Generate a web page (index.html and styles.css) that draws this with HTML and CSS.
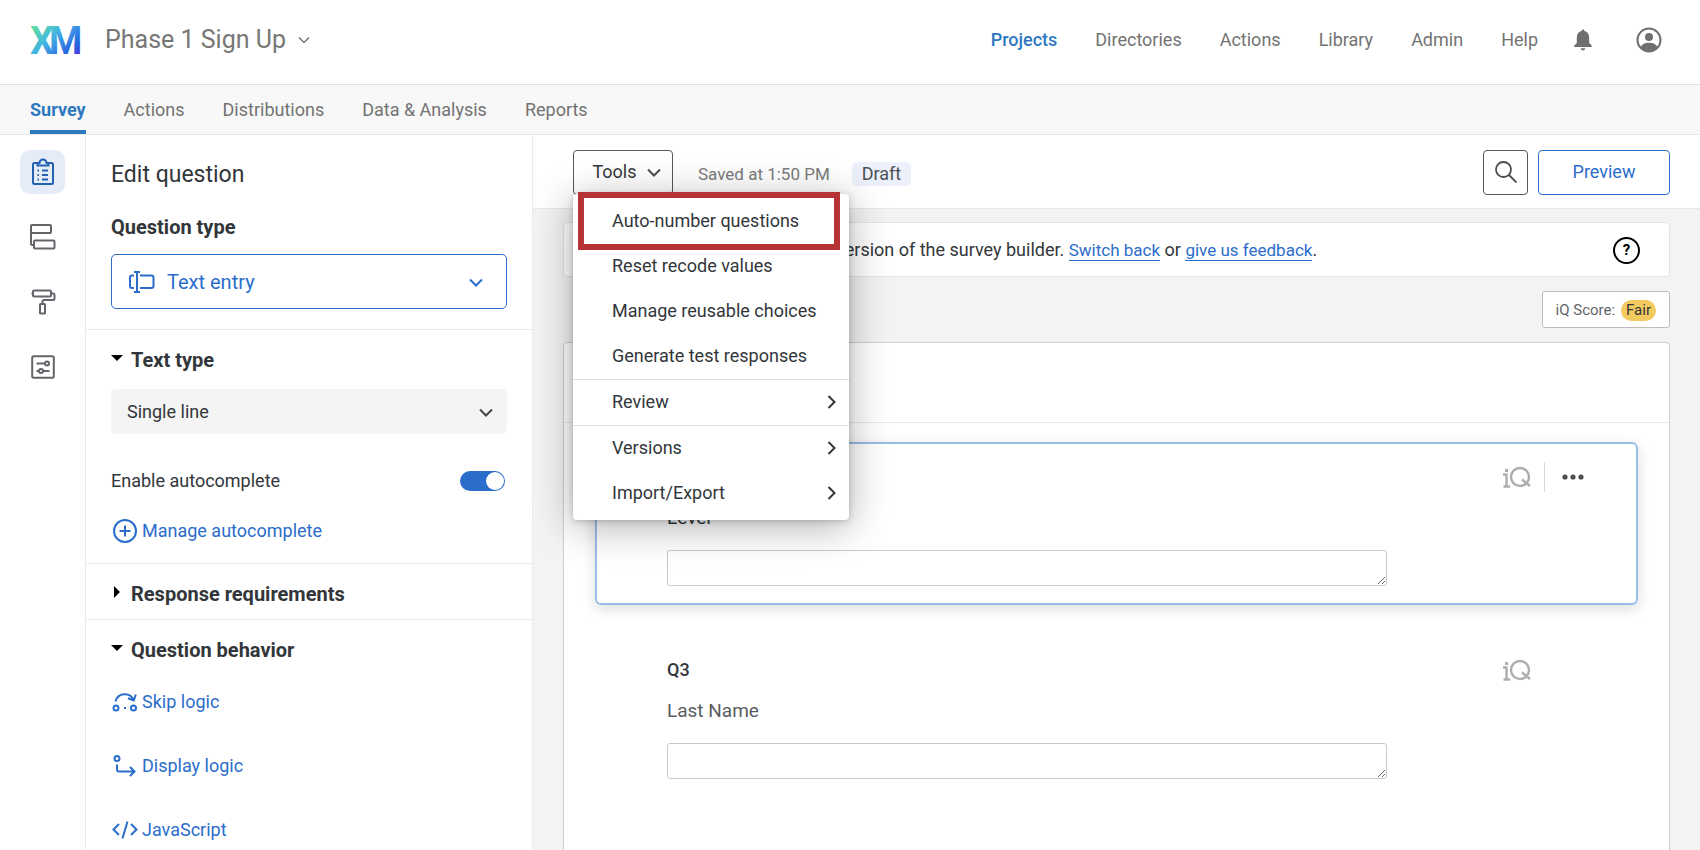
FILE: index.html
```html
<!DOCTYPE html>
<html lang="en">
<head>
  <meta charset="UTF-8">
  <title>Phase 1 Sign Up - Survey Builder</title>
  <link rel="stylesheet" href="styles.css">
</head>
<body>

<header class="header">
  <svg class="logo" width="52" height="48" viewBox="0 -11 52 48" role="img" aria-label="XM">
    <defs>
      <linearGradient id="xm" gradientUnits="userSpaceOnUse" x1="8" y1="-2" x2="42" y2="36">
        <stop offset="0" stop-color="#5fdca6"/>
        <stop offset="0.35" stop-color="#41b5e0"/>
        <stop offset="0.6" stop-color="#3a86e6"/>
        <stop offset="0.8" stop-color="#2464dc"/>
        <stop offset="1" stop-color="#5a2ae0"/>
      </linearGradient>
    </defs>
    <g class="logo-text" fill="url(#xm)">
      <text x="0" y="27">X</text>
      <text x="19" y="27">M</text>
    </g>
  </svg>
  <button class="project-name">Phase 1 Sign Up
    <svg width="12" height="8" viewBox="0 0 12 8"><path d="M1 1.5l5 5 5-5"/></svg>
  </button>
  <nav class="main-nav">
    <a href="#" class="current">Projects</a>
    <a href="#">Directories</a>
    <a href="#">Actions</a>
    <a href="#">Library</a>
    <a href="#">Admin</a>
    <a href="#">Help</a>
  </nav>
  <button class="icon-btn bell" aria-label="Notifications">
    <svg width="18" height="22" viewBox="0 0 18 22"><path d="M9 0.5c-1 0-1.5 0.7-1.5 1.6C4.7 2.8 2.8 5 2.8 8.5v5.5L0.3 16.5v1.5h17.4v-1.5L15.2 14V8.5c0-3.5-1.9-5.7-4.7-6.4C10.5 1.2 10 0.5 9 0.5zM6.8 19.2a2.2 2.2 0 0 0 4.4 0z"/></svg>
  </button>
  <button class="icon-btn" aria-label="Account">
    <svg width="26" height="26" viewBox="0 0 26 26"><circle class="ring" cx="13" cy="13" r="11.5"/><circle cx="13" cy="10" r="4"/><path d="M4.5 20.5C6 17 9 15.8 13 15.8s7 1.2 8.5 4.7C19.3 23 16.4 24.5 13 24.5s-6.3-1.5-8.5-4z"/></svg>
  </button>
</header>

<nav class="tabs">
  <a href="#" class="active">Survey</a>
  <a href="#">Actions</a>
  <a href="#">Distributions</a>
  <a href="#">Data &amp; Analysis</a>
  <a href="#">Reports</a>
</nav>

<main class="main">
  <aside class="rail">
    <button class="rail-btn active" aria-label="Builder">
      <svg width="24" height="28" viewBox="0 0 24 28"><path d="M6.5 5H3.5A1.5 1.5 0 0 0 2 6.5v18A1.5 1.5 0 0 0 3.5 26h17a1.5 1.5 0 0 0 1.5-1.5v-18A1.5 1.5 0 0 0 20.5 5h-3M6.5 5v2.5h11V5h-2a3.5 3.5 0 0 0-7 0zM11 12.5h6M11 17h6M11 21.5h6M6.5 12.5h1.5M6.5 17h1.5M6.5 21.5h1.5"/></svg>
    </button>
    <button class="rail-btn" aria-label="Survey flow">
      <svg width="26" height="26" viewBox="0 0 26 26"><rect x="1" y="1" width="20" height="8" rx="1"/><rect x="4" y="16.5" width="20.5" height="8" rx="1"/><path d="M1 8v11.5a1.5 1.5 0 0 0 1.5 1.5H4"/></svg>
    </button>
    <button class="rail-btn" aria-label="Look and feel">
      <svg width="26" height="26" viewBox="0 0 26 26"><rect x="3" y="1.5" width="18" height="6" rx="1"/><path d="M1.5 4.5H3M21 4.5h2a1.5 1.5 0 0 1 1.5 1.5v3.5a1.5 1.5 0 0 1-1.5 1.5H14a1.5 1.5 0 0 0-1.5 1.5V15"/><rect x="10" y="15" width="5" height="9.5" rx="0.5"/></svg>
    </button>
    <button class="rail-btn" aria-label="Survey options">
      <svg width="24" height="24" viewBox="0 0 24 24"><rect x="1.2" y="1.2" width="21.6" height="21.6" rx="1.5"/><path d="M5.5 8.5h8.5M5.5 16h2.5M12 16h6.5"/><circle cx="16" cy="8.5" r="2"/><circle cx="10" cy="16" r="2"/></svg>
    </button>
  </aside>

  <section class="panel">
    <div class="panel-section first">
      <h1>Edit question</h1>
      <label class="panel-label" for="questionType">Question type</label>
      <div class="select-wrap blue">
        <svg class="lead" width="26" height="22" viewBox="0 0 26 22"><path d="M8 1v20M5 1h6M5 21h6M5 4.5H3a2 2 0 0 0-2 2v8.5a2 2 0 0 0 2 2h2M11 4.5h11.5a2 2 0 0 1 2 2v8.5a2 2 0 0 1-2 2H11"/></svg>
        <select id="questionType"><option>Text entry</option></select>
        <svg class="caret" width="14" height="9" viewBox="0 0 14 9"><path d="M1 1.5l6 6 6-6"/></svg>
      </div>
    </div>

    <div class="panel-section">
      <h2><span class="tri down"></span><label for="textType">Text type</label></h2>
      <div class="select-wrap grey">
        <select id="textType"><option>Single line</option></select>
        <svg class="caret" width="14" height="9" viewBox="0 0 14 9"><path d="M1 1.5l6 6 6-6"/></svg>
      </div>
      <div class="toggle-row">
        <label for="autocomplete">Enable autocomplete</label>
        <input class="toggle" id="autocomplete" type="checkbox" checked>
      </div>
      <a href="#" class="action">
        <svg width="26" height="26" viewBox="0 0 26 26"><circle cx="13" cy="13" r="11"/><path d="M13 7.5v11M7.5 13h11"/></svg>
        Manage autocomplete
      </a>
    </div>

    <div class="panel-section closed">
      <h2><span class="tri right"></span>Response requirements</h2>
    </div>

    <div class="panel-section behavior">
      <h2><span class="tri down"></span>Question behavior</h2>
      <a href="#" class="action">
        <svg width="26" height="26" viewBox="0 0 26 26"><circle cx="4" cy="19" r="2.5"/><circle cx="21.5" cy="19" r="2.5"/><path d="M3.5 12.5A9.5 9.5 0 0 1 21.5 11M23.8 5.5l-2 6-5.8-2.2M12 19h2"/></svg>
        Skip logic
      </a>
      <a href="#" class="action">
        <svg width="26" height="26" viewBox="0 0 26 26"><circle cx="5" cy="5.5" r="2.5"/><path d="M5 11.5V16.5a2 2 0 0 0 2 2h15M18 14l4.5 4.5L18 23"/></svg>
        Display logic
      </a>
      <a href="#" class="action">
        <svg width="26" height="26" viewBox="0 0 26 26"><path d="M7 7L1.5 12.5 7 18M19 7l5.5 5.5L19 18M15.5 4.5l-5 17"/></svg>
        JavaScript
      </a>
    </div>
  </section>

  <section class="canvas">
    <div class="toolbar">
      <div class="tools">
        <button class="btn tools-btn">Tools
          <svg width="14" height="9" viewBox="0 0 14 9"><path d="M1 1.5l6 6 6-6"/></svg>
        </button>
        <div class="menu">
          <div class="menu-group">
            <button class="highlighted">Auto-number questions</button>
            <button>Reset recode values</button>
            <button>Manage reusable choices</button>
            <button>Generate test responses</button>
          </div>
          <div class="menu-group">
            <button>Review <svg width="9" height="14" viewBox="0 0 9 14"><path d="M1.5 1l6 6-6 6"/></svg></button>
          </div>
          <div class="menu-group">
            <button>Versions <svg width="9" height="14" viewBox="0 0 9 14"><path d="M1.5 1l6 6-6 6"/></svg></button>
            <button>Import/Export <svg width="9" height="14" viewBox="0 0 9 14"><path d="M1.5 1l6 6-6 6"/></svg></button>
          </div>
        </div>
      </div>
      <span class="saved">Saved at 1:50 PM</span>
      <span class="draft">Draft</span>
      <button class="btn search-btn" aria-label="Search">
        <svg width="22" height="22" viewBox="0 0 22 22"><circle cx="8.5" cy="8.5" r="7.5"/><path d="M14 14l7.5 7.5"/></svg>
      </button>
      <button class="btn preview-btn">Preview</button>
    </div>

    <div class="workspace">
      <div class="banner">
        <p>You are currently using the new version of the survey builder. <a href="#">Switch back</a> or <a href="#">give us feedback</a>.</p>
        <button class="help" aria-label="Help">?</button>
      </div>

      <button class="score">iQ Score: <span>Fair</span></button>

      <div class="block">
        <div class="block-header"></div>

        <div class="question selected">
          <div class="question-top">
            <span class="qid">Q2</span>
            <div class="side">
              <svg class="iq" width="29" height="22" viewBox="0 0 29 22"><path d="M1 8.5h3.5V20M1.5 20.5h6.5"/><rect x="3" y="3" width="3" height="3" class="dot"/><circle cx="18" cy="11" r="9"/><path d="M20 13.5l8 6.5"/></svg>
              <button class="more" aria-label="More">
                <svg width="22" height="6" viewBox="0 0 22 6"><circle cx="3" cy="3" r="2.6"/><circle cx="11" cy="3" r="2.6"/><circle cx="19" cy="3" r="2.6"/></svg>
              </button>
            </div>
          </div>
          <label class="qtext" for="q2">Level</label>
          <textarea id="q2"></textarea>
        </div>

        <div class="question">
          <div class="question-top">
            <span class="qid">Q3</span>
            <div class="side">
              <svg class="iq" width="29" height="22" viewBox="0 0 29 22"><path d="M1 8.5h3.5V20M1.5 20.5h6.5"/><rect x="3" y="3" width="3" height="3" class="dot"/><circle cx="18" cy="11" r="9"/><path d="M20 13.5l8 6.5"/></svg>
            </div>
          </div>
          <label class="qtext" for="q3">Last Name</label>
          <textarea id="q3"></textarea>
        </div>
      </div>
    </div>
  </section>
</main>

</body>
</html>
```
FILE: styles.css
```css
* {
  box-sizing: border-box;
}

body {
  margin: 0;
  height: 100vh;
  display: flex;
  flex-direction: column;
  overflow: hidden;
  font-family: Roboto, "Liberation Sans", sans-serif;
  font-size: 18px;
  line-height: 24px;
  color: #32363a;
  background: #fff;
}

button, select, textarea {
  font: inherit;
  color: inherit;
}

button {
  background: none;
  border: none;
  padding: 0;
  cursor: pointer;
}

a {
  color: #2b6dcb;
  text-decoration: none;
}

svg {
  display: block;
  flex: none;
  fill: none;
  stroke-width: 2;
}

h1, h2, p {
  margin: 0;
}

/* top header */
.header {
  flex: none;
  display: flex;
  align-items: center;
  height: 85px;
  padding: 0 38px 4px 30px;
  border-bottom: 1px solid #e0e0e0;
}

.logo-text {
  font-size: 38px;
  font-weight: 700;
}

.project-name {
  display: flex;
  align-items: center;
  gap: 12px;
  margin-left: 23px;
  font-size: 25px;
  line-height: 32px;
  color: #777;
}

.project-name svg {
  stroke: #777;
  stroke-width: 1.5;
}

.main-nav {
  display: flex;
  gap: 38px;
  margin-left: auto;
}

.main-nav a, .tabs a {
  color: #737373;
}

.main-nav a.current {
  color: #2e78bf;
  font-weight: 500;
}

.icon-btn {
  margin-left: 44px;
}

.icon-btn.bell {
  margin-left: 36px;
}

.icon-btn svg {
  fill: #6f6f6f;
}

.icon-btn .ring {
  fill: none;
  stroke: #6f6f6f;
}

/* survey tabs */
.tabs {
  flex: none;
  display: flex;
  gap: 38px;
  height: 50px;
  padding: 0 30px;
  background: #f8f8f8;
  border-bottom: 1px solid #e6e6e6;
}

.tabs a {
  padding-top: 13px;
}

.tabs a.active {
  color: #2e78bf;
  font-weight: 700;
  border-bottom: 4px solid #2e78bf;
}

.main {
  flex: 1;
  min-height: 0;
  display: flex;
}

/* icon rail */
.rail {
  flex: none;
  display: flex;
  flex-direction: column;
  gap: 21px;
  padding: 15px 20px;
  border-right: 1px solid #ebebeb;
}

.rail-btn {
  display: flex;
  align-items: center;
  justify-content: center;
  width: 45px;
  height: 44px;
  border-radius: 10px;
}

.rail-btn svg {
  stroke: #62666a;
}

.rail-btn.active {
  background: #e5ecf8;
}

.rail-btn.active svg {
  stroke: #2360b0;
}

/* edit panel */
.panel {
  flex: none;
  width: 447px;
  overflow: hidden;
  border-right: 1px solid #ebebeb;
}

.panel-section {
  display: flex;
  flex-direction: column;
  padding: 18px 25px 20px;
  border-bottom: 1px solid #ebebeb;
}

.panel-section.first {
  padding-top: 25px;
}

.panel-section.closed {
  padding-bottom: 13px;
}

.panel h1 {
  font-size: 23px;
  line-height: 30px;
  font-weight: 400;
}

.panel h2, .panel-label {
  font-size: 20px;
  line-height: 24px;
  font-weight: 700;
}

.panel h2 {
  display: flex;
}

.panel-label {
  margin: 25px 0 15px;
}

.tri {
  width: 20px;
  height: 20px;
  display: flex;
  align-items: center;
}

.tri::before {
  content: "";
  border: 6px solid transparent;
}

.tri.down::before {
  border-top-color: #000;
  border-bottom: none;
}

.tri.right::before {
  margin-left: 3px;
  border-left-color: #000;
  border-right: none;
}

.select-wrap {
  position: relative;
}

.select-wrap select {
  display: block;
  width: 100%;
  appearance: none;
  border-radius: 5px;
}

.select-wrap svg {
  position: absolute;
  pointer-events: none;
}

.blue select {
  height: 55px;
  padding: 0 55px;
  font-size: 20px;
  color: #2b6dcb;
  background: #fff;
  border: 1px solid #2b6dcb;
}

.blue svg {
  stroke: #2b6dcb;
}

.blue .lead {
  left: 18px;
  top: 17px;
}

.blue .caret {
  right: 24px;
  top: 24px;
}

.grey {
  margin-top: 17px;
}

.grey select {
  height: 45px;
  padding: 0 16px;
  background: #f4f4f4;
  border: none;
}

.grey .caret {
  right: 14px;
  top: 19px;
  stroke: #444;
}

.toggle-row {
  display: flex;
  justify-content: space-between;
  align-items: center;
  margin: 35px 2px 26px 0;
}

.toggle {
  appearance: none;
  display: flex;
  justify-content: flex-end;
  width: 45px;
  height: 20px;
  margin: 0;
  padding: 1px;
  border-radius: 10px;
  background: #2b6dcb;
}

.toggle::before {
  content: "";
  width: 18px;
  height: 18px;
  border-radius: 50%;
  background: #fff;
}

.action {
  display: flex;
  align-items: center;
  gap: 4px;
  height: 24px;
  margin-left: 1px;
}

.action svg {
  stroke: #2b6dcb;
}

.behavior {
  gap: 40px;
  border-bottom: none;
}

.behavior h2 {
  margin-bottom: -12px;
}

/* canvas */
.canvas {
  flex: 1;
  min-width: 0;
  display: flex;
  flex-direction: column;
  background: #f3f3f3;
}

.toolbar {
  flex: none;
  display: flex;
  align-items: center;
  height: 74px;
  padding: 1px 30px 0 40px;
  background: #fff;
  border-bottom: 1px solid #e8e8e8;
}

.btn {
  display: flex;
  align-items: center;
  justify-content: center;
  height: 45px;
  border: 1px solid #55585c;
  border-radius: 4px;
}

.tools {
  position: relative;
}

.tools-btn {
  width: 100px;
  gap: 10px;
  padding-left: 7px;
}

.btn svg {
  stroke: #4a4d50;
}

.search-btn svg {
  stroke-width: 1.8;
}

.saved {
  margin-left: 25px;
  padding-top: 4px;
  font-size: 17px;
  color: #7a7a7a;
}

.draft {
  margin: 4px auto 0 22px;
  padding: 0 10px;
  border-radius: 5px;
  background: #ebf0fa;
  color: #4c5056;
}

.search-btn {
  width: 45px;
}

.preview-btn {
  width: 132px;
  margin-left: 10px;
  color: #2b6dcb;
  border-color: #2b6dcb;
}

/* tools menu */
.menu {
  position: absolute;
  top: 44px;
  left: 0;
  z-index: 10;
  width: 276px;
  padding: 5px 0 4px;
  background: #fff;
  border-radius: 4px;
  box-shadow: 0 6px 40px rgba(0, 0, 0, 0.32), 0 1px 6px rgba(0, 0, 0, 0.2);
}

.menu-group + .menu-group {
  border-top: 1px solid #e0e0e0;
}

.menu button {
  position: relative;
  display: flex;
  align-items: center;
  justify-content: space-between;
  width: 100%;
  height: 45px;
  padding: 0 13px 0 39px;
}

.menu svg {
  stroke: #32363a;
}

.menu .highlighted::after {
  content: "";
  position: absolute;
  inset: -7px 9px -6px 5px;
  border: 6px solid #b63235;
}

.workspace {
  flex: 1;
  min-height: 0;
  display: flex;
  flex-direction: column;
  padding: 13px 30px 0;
}

.banner {
  flex: none;
  display: flex;
  align-items: center;
  justify-content: space-between;
  height: 55px;
  padding: 1px 29px 0 18px;
  background: #fff;
  border: 1px solid #e4e4e4;
  border-radius: 4px;
}

.banner a {
  font-size: 17px;
  border-bottom: 1px solid #2b6dcb;
}

.help {
  width: 27px;
  height: 27px;
  border: 2px solid #000;
  border-radius: 50%;
  font-weight: 700;
  font-size: 15px;
  line-height: 22px;
  color: #000;
}

.score {
  flex: none;
  align-self: flex-end;
  display: flex;
  align-items: center;
  gap: 6px;
  height: 37px;
  margin: 14px 0;
  padding: 1px 13px 0;
  background: #fff;
  border: 1px solid #bdbdbd;
  border-radius: 3px;
  font-size: 15px;
  color: #626568;
}

.score span {
  padding: 0 5px;
  line-height: 21px;
  border-radius: 11px;
  background: #f2ca60;
  color: #32363a;
}

/* question block */
.block {
  flex: 1 0 auto;
  padding-bottom: 60px;
  background: #fff;
  border: 1px solid #cfcfcf;
  border-radius: 4px;
}

.block-header {
  height: 80px;
  margin-bottom: 19px;
  border-bottom: 1px solid #e8e8e8;
}

.question {
  display: flex;
  flex-direction: column;
  margin: 0 31px 30px;
  padding: 18px 52px 17px 70px;
  border: 2px solid transparent;
  border-radius: 6px;
}

.question.selected {
  border-color: #99bde9;
  box-shadow: 0 4px 14px rgba(0, 0, 0, 0.14);
}

.question-top {
  display: flex;
  align-items: center;
  justify-content: space-between;
  height: 30px;
}

.qid {
  font-weight: 500;
}

.side {
  display: flex;
  align-items: center;
  width: 82px;
}

.iq {
  stroke: #adadad;
  stroke-width: 2.4;
}

.iq .dot {
  fill: #adadad;
  stroke: none;
}

.more {
  height: 30px;
  margin-left: 13px;
  padding-left: 17px;
  border-left: 1px solid #d8d8d8;
}

.more svg {
  fill: #4a4d50;
}

.qtext {
  margin: 14px 0 20px;
  font-size: 19px;
  color: #5a5d60;
}

.selected .qtext {
  color: #32363a;
}

textarea {
  display: block;
  width: 720px;
  max-width: 100%;
  height: 36px;
  padding: 5px 8px;
  border: 1px solid #c9c9c9;
  border-radius: 3px;
  background: #fff;
}
```
